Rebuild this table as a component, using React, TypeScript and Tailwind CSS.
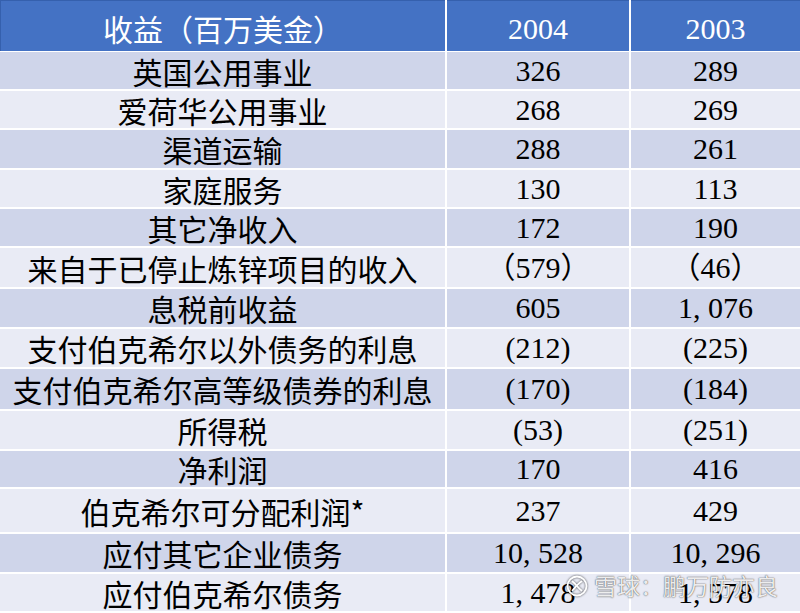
import React from 'react'

const cjk = "font-['Noto_Sans_CJK_SC',sans-serif]"
const num = "font-['Liberation_Serif','Noto_Sans_CJK_SC',serif]"

const rows: [string, string, string, string][] = [
    ['英国公用事业', '326', '289', 'h-[39px]'],
    ['爱荷华公用事业', '268', '269', 'h-[39px]'],
    ['渠道运输', '288', '261', 'h-[40px]'],
    ['家庭服务', '130', '113', 'h-[39px]'],
    ['其它净收入', '172', '190', 'h-[39px]'],
    ['来自于已停止炼锌项目的收入', '（579）', '（46）', 'h-[41px]'],
    ['息税前收益', '605', '1,076', 'h-[40px]'],
    ['支付伯克希尔以外债务的利息', '(212)', '(225)', 'h-[40px]'],
    ['支付伯克希尔高等级债券的利息', '(170)', '(184)', 'h-[42px]'],
    ['所得税', '(53)', '(251)', 'h-[40px]'],
    ['净利润', '170', '416', 'h-[38px]'],
    ['伯克希尔可分配利润*', '237', '429', 'h-[45px]'],
    ['应付其它企业债务', '10,528', '10,296', 'h-[40px]'],
    ['应付伯克希尔债务', '1,478', '1,578', 'h-[39px]'],
]

// the source renders the comma half an em wide
function Num({ value }: { value: string }) {
    const parts = value.split(',')
    return (
        <span className={num}>
            {parts.map((p, i) => (
                <React.Fragment key={i}>
                    {i > 0 && <span className="inline-block w-[0.5em]">,</span>}
                    {p}
                </React.Fragment>
            ))}
        </span>
    )
}

function Watermark() {
    return (
        <div className="absolute left-[566px] top-[574px] flex items-center gap-[6px] text-white/90 [text-shadow:0_0_1px_rgba(0,0,0,0.7),0_0_2px_rgba(0,0,0,0.35)]">
            <svg width="22" height="22" viewBox="0 0 22 22" fill="none" className="[filter:drop-shadow(0_0_1px_rgba(0,0,0,0.7))]">
                <circle cx="11" cy="11" r="9.5" stroke="white" strokeWidth="1.8" />
                <path d="M6.5 6.5 C10 9 12 13 15.5 15.5" stroke="white" strokeWidth="1.8" strokeLinecap="round" />
                <path d="M15.5 6.5 C12 8.5 9.5 12 6.5 15.5" stroke="white" strokeWidth="1.8" strokeLinecap="round" />
            </svg>
            <span className={`${cjk} text-[23px] leading-none`}>雪球：鹏万防亦良</span>
        </div>
    )
}

export default function App() {
    return (
        <div className="relative w-[800px] h-[613px] overflow-hidden bg-white">
            <div className="flex flex-col">
                <div className="grid grid-cols-[445px_182px_1fr] gap-x-[2px] h-[52px] pb-[3px] bg-white">
                    <div className={`${cjk} bg-[#4472c4] border-t border-l border-[#3560ad] flex items-center justify-center pt-[5px] text-[30px] text-white`}>
                        收益（百万美金）
                    </div>
                    <div className={`${num} bg-[#4472c4] border-t border-[#3560ad] flex items-center justify-center pt-[5px] text-[30px] text-white`}>
                        2004
                    </div>
                    <div className={`${num} bg-[#4472c4] border-t border-[#3560ad] flex items-center justify-center pt-[5px] text-[30px] text-white`}>
                        2003
                    </div>
                </div>
                {rows.map(([label, a, b, h], i) => {
                    const bg = i % 2 === 0 ? 'bg-[#cfd5ea]' : 'bg-[#e9ebf5]'
                    return (
                        <div key={label} className={`grid grid-cols-[445px_182px_1fr] gap-x-[2px] pb-[2px] bg-white ${h}`}>
                            <div className={`${cjk} ${bg} flex items-center justify-center text-[30px] text-black leading-none whitespace-nowrap`}>
                                {label}
                            </div>
                            <div className={`${bg} flex items-center justify-center text-[30px] text-black leading-none`}>
                                <Num value={a} />
                            </div>
                            <div className={`${bg} flex items-center justify-center text-[30px] text-black leading-none`}>
                                <Num value={b} />
                            </div>
                        </div>
                    )
                })}
            </div>
            <Watermark />
        </div>
    )
}
